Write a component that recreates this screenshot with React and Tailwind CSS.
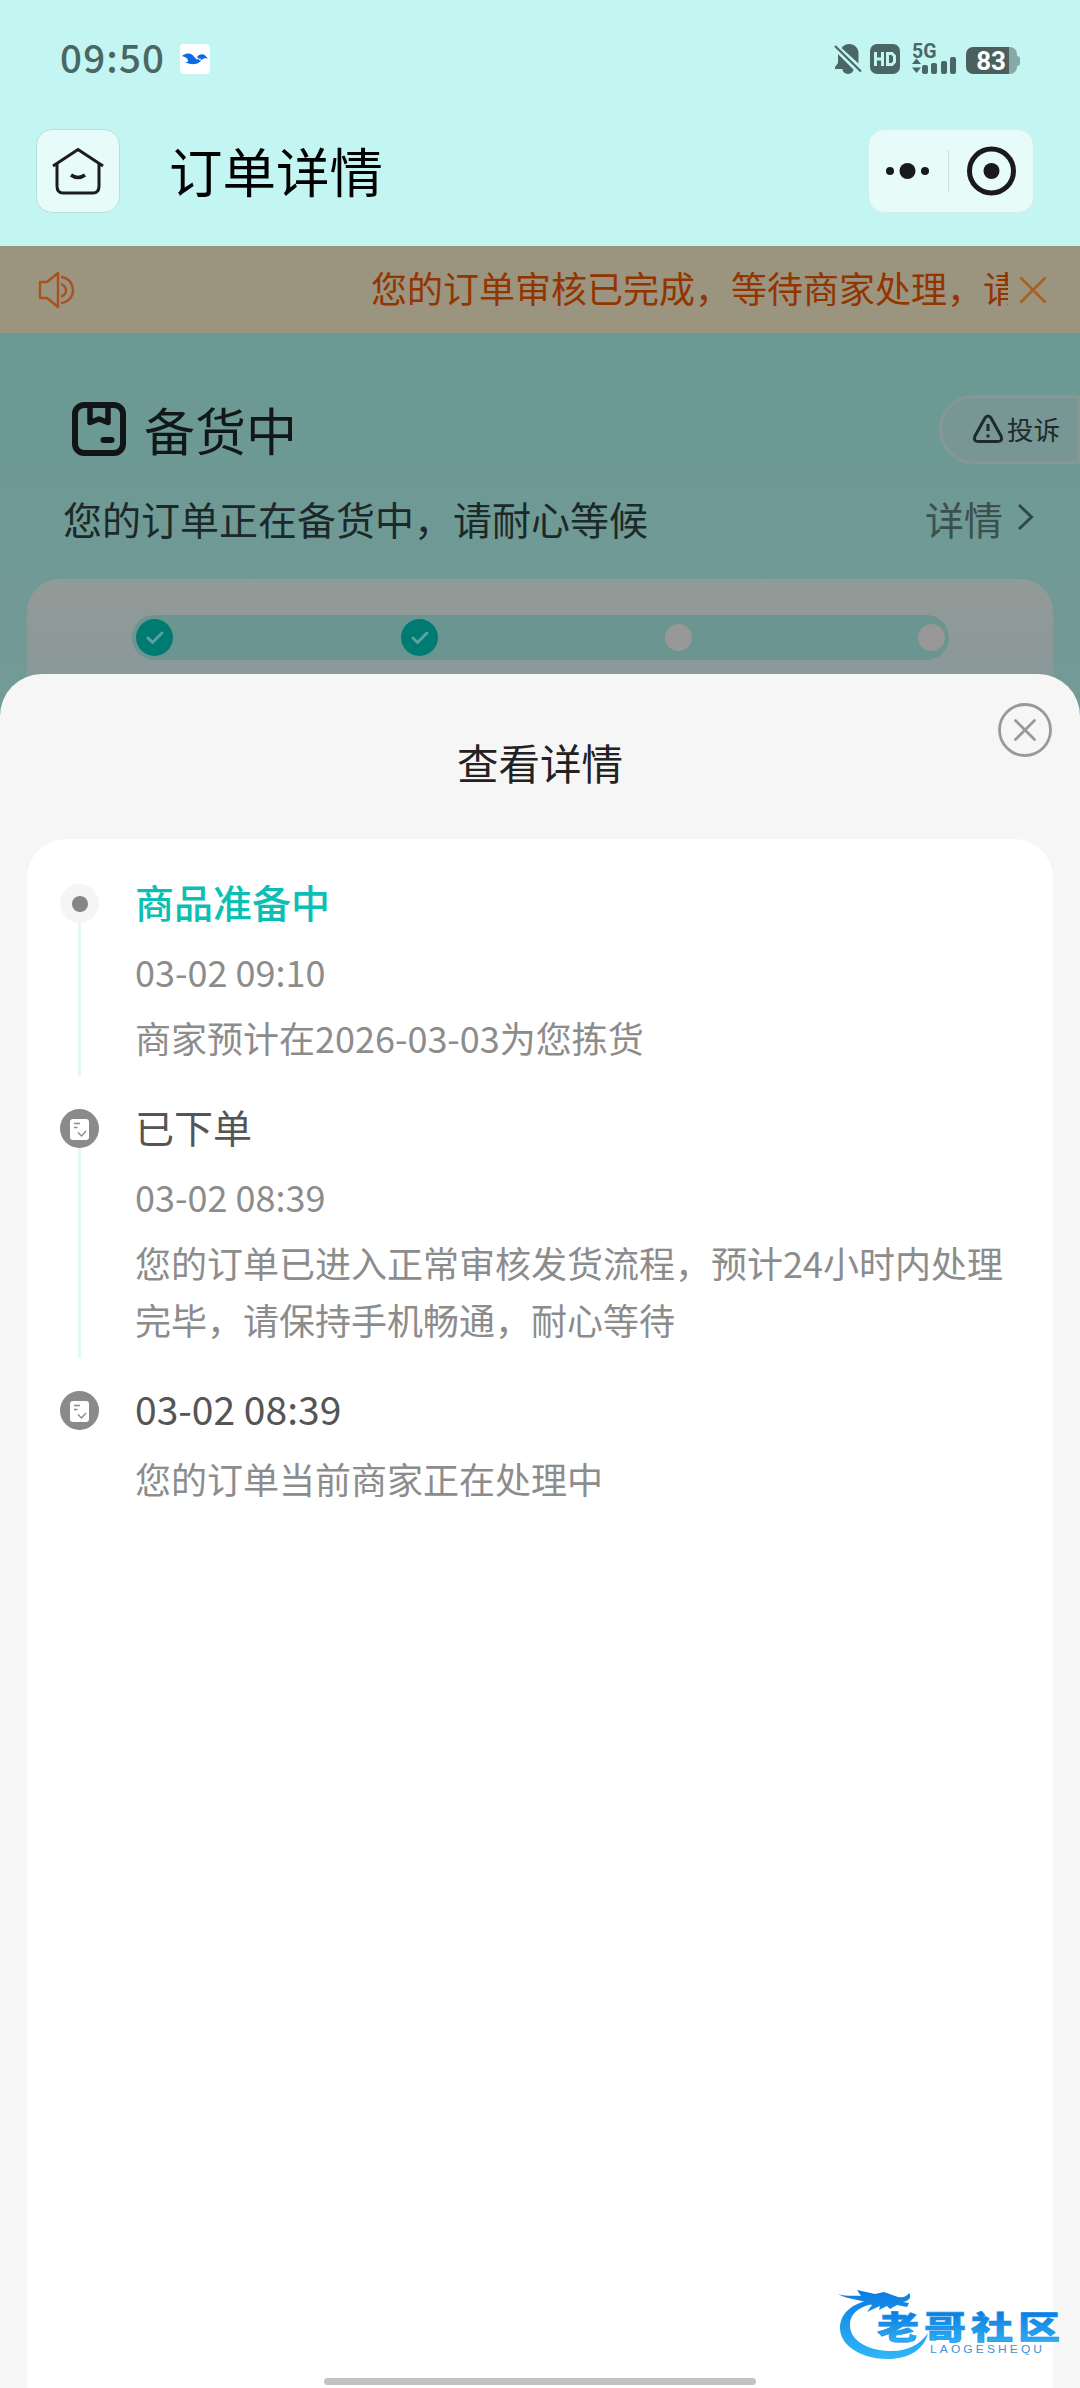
const timeline = [
  {
    title: '商品准备中',
    time: '03-02 09:10',
    desc: '商家预计在2026-03-03为您拣货',
    active: true,
  },
  {
    title: '已下单',
    time: '03-02 08:39',
    desc: '您的订单已进入正常审核发货流程，预计24小时内处理完毕，请保持手机畅通，耐心等待',
  },
  {
    title: '03-02 08:39',
    desc: '您的订单当前商家正在处理中',
  },
];

function StatusBar() {
  return (
    <div className="flex h-[118px] items-center justify-between pl-[60px] pr-[60px] text-[#4a6766]">
      <div className="flex items-center">
        <span className="-mt-[5px] w-[120px] font-['Noto_Sans_CJK_SC'] text-[38.500px] leading-none font-medium tracking-[1.2px]">09:50</span>
        <span className="flex h-[30px] w-[30px] items-center justify-center rounded-[4px] bg-white">
          <svg width="26" height="12" viewBox="0 0 26 12" fill="#0a6ae8">
            <path d="M0 3C3 0 8 -0.500 11 2.500C13 4.500 14 6.500 16 6.500L17 5.500C16.500 4.800 15.500 4.500 14.500 4.500C17 0.500 22 0 24 3.500L26 5.500C23 5 21 5.500 19.500 7C18 9 16.500 10.500 13 11C9 11.500 6 10.500 3 9.500C5 9.500 6.500 8.500 6 7C5 4.500 3 4 0 3Z" />
            <circle cx="18" cy="6.500" r="1" fill="#fff" />
          </svg>
        </span>
      </div>
      <div className="flex h-[30px] items-start">
        {/* muted bell */}
        <svg width="28" height="30" viewBox="0 0 28 30" fill="#4a6766">
          <path d="M1 25V23L4 19V10L19 25Z" />
          <path d="M7.500 4C9.500 1.300 12 0 15 0C20.500 0 24.500 4 24.500 9V19.500L7.500 4Z" />
          <path d="M8.500 25H19.500A5.500 5 0 0 1 8.500 25Z" />
          <path d="M1 2L27 27.500" stroke="#4a6766" strokeWidth="2.200" />
        </svg>
        <span className="ml-2 flex h-[30px] w-[30px] items-center justify-center rounded-[7px] bg-[#4a6766]">
          <svg width="24" height="14" viewBox="0 0 24 14" fill="none" stroke="#c3f6f2" strokeWidth="3">
            <path d="M2.500 0V14M9.500 0V14M2.500 7H9.500M14.500 1.500H19L21.500 4V10L19 12.500H14.500Z" />
          </svg>
        </span>
        <div className="ml-3 flex h-[30px] w-[46px] flex-col justify-between">
          <span className="h-[15px] font-['Roboto'] text-[19.500px] leading-[15px] font-bold">5G</span>
          <svg className="-mt-1" width="46" height="17" viewBox="0 0 46 17" fill="#4a6766">
            <path d="M0 7L4.500 1.500L9 7ZM0 10.500H9L4.500 16Z" />
            <rect x="10" y="8" width="6" height="9" rx="2" />
            <rect x="19" y="6" width="6" height="11" rx="2" />
            <rect x="29" y="4" width="6" height="13" rx="2" />
            <rect x="38" y="0" width="6" height="17" rx="2" />
          </svg>
        </div>
        <div className="ml-2 mt-[3px] flex items-center">
          <span className="flex h-[27px] w-[43px] items-center justify-end rounded-l-[7px] bg-[#4a5f5e] pr-[3px] font-['Roboto'] text-[26px] leading-none font-bold text-white">83</span>
          <span className="h-[27px] w-2 rounded-r-[7px] bg-[#86a9a7]" />
          <span className="h-[10px] w-[3px] rounded-r-[3px] bg-[#86a9a7]" />
        </div>
      </div>
    </div>
  );
}

function NavBar() {
  return (
    <div className="flex h-[128px] items-start pt-[11px] pr-[46px] pl-9">
      <button className="flex h-[84px] w-[84px] items-center justify-center rounded-[16px] border border-[#b9dfdc] bg-[#e7fbf9]">
        <svg width="52" height="50" viewBox="0 0 52 50" fill="none" stroke="#1c1c1c" strokeWidth="3">
          <path d="M1 20L26 3.500L51 20" />
          <path d="M5 18V40Q5 47 11 47H41Q47 47 47 40V18" />
          <path d="M19 29Q26 34 33 29" strokeWidth="3.500" />
        </svg>
      </button>
      <h1 className="ml-[49px] text-[53.500px] leading-[82px] text-black">订单详情</h1>
      <div className="ml-auto flex h-[84px] w-[166px] items-center rounded-[16px] border border-[#d3eeec] bg-[#e7fbf9]">
        <svg width="164" height="82" viewBox="0 0 164 82" fill="#1a1a1a">
          <circle cx="21" cy="41" r="4" />
          <circle cx="38.500" cy="41" r="8" />
          <circle cx="56" cy="41" r="4" />
          <rect x="79" y="20" width="1" height="42" fill="#c9e2e0" />
          <circle cx="122.500" cy="41" r="22" fill="none" stroke="#1a1a1a" strokeWidth="5" />
          <circle cx="122.500" cy="41" r="8" />
        </svg>
      </div>
    </div>
  );
}

function NoticeBar() {
  return (
    <div className="flex h-[87px] items-center bg-[#9b947f] pr-[33px] pl-[38px]">
      <svg width="38" height="38" viewBox="0 0 38 38" fill="none" stroke="#a9521f" strokeWidth="2.400" strokeLinejoin="round">
        <path d="M2 11H9L20 2V36L9 27H2Z" />
        <path d="M23 13Q28 15 28 19.500Q28 24 23 25.500" />
        <path d="M23 6C32 7 35 14 35 19.500S31 31 23 32" />
      </svg>
      <p className="-mt-[5px] ml-[295px] w-[637px] overflow-hidden text-[36px] leading-[54px] whitespace-nowrap text-[#933500]">
        您的订单审核已完成，等待商家处理，请耐心等待
      </p>
      <svg className="ml-[11px]" width="28" height="28" viewBox="0 0 28 28" fill="none" stroke="#a86120" strokeWidth="2.600">
        <path d="M1.500 1.500L26.500 26.500M26.500 1.500L1.500 26.500" />
      </svg>
    </div>
  );
}

function CheckDot() {
  return (
    <span className="flex h-[37px] w-[37px] items-center justify-center rounded-full bg-[#007b72]">
      <svg width="18" height="14" viewBox="0 0 18 14" fill="none" stroke="#5aa39d" strokeWidth="3" strokeLinecap="round" strokeLinejoin="round">
        <path d="M2 7L6.500 11.500L16 2" />
      </svg>
    </span>
  );
}

function OrderStatus() {
  return (
    <div className="h-[387px] bg-linear-to-b from-[#6b9994] to-[#739a97] pt-[62px]">
      <div className="flex h-[68px] items-center pl-[72px]">
        <svg width="54" height="54" viewBox="0 0 54 54" fill="none" stroke="#111515" strokeWidth="6" strokeLinejoin="round">
          <rect x="3" y="3" width="48" height="48" rx="9" />
          <path d="M18 4V20.500L27 17L36 20.500V4" strokeWidth="5.500" />
          <path d="M31.500 38H39.500" strokeLinecap="round" />
        </svg>
        <h2 className="ml-[18px] text-[51px] leading-[68px] text-[#111817]">备货中</h2>
        <div className="ml-auto flex h-[69px] w-[141px] items-center rounded-l-full border-3 border-[#869794] bg-[#789794] pl-[30px] text-[#1d2b2a]">
          <svg width="32" height="30" viewBox="0 0 32 30" fill="none" stroke="#1d2b2a" strokeWidth="3" strokeLinejoin="round">
            <path d="M13 4Q16 0 19 4L29 22Q31 27.500 26 27.500H6Q1 27.500 3 22Z" />
            <path d="M16 10V17M16 20.500V23.500" />
          </svg>
          <span className="ml-[3px] text-[26.500px] leading-none">投诉</span>
        </div>
      </div>
      <div className="mt-[27px] flex h-[56px] items-center pr-[46px] pl-[63px] text-[39px]">
        <p className="text-[#1c2928]">您的订单正在备货中，请耐心等候</p>
        <span className="ml-auto text-[#3b504e]">详情</span>
        <svg className="-mt-[3px] ml-[12px]" width="19" height="28" viewBox="0 0 19 28" fill="none" stroke="#344745" strokeWidth="3">
          <path d="M4 2L16.500 14L4 26" />
        </svg>
      </div>
      <div className="mx-[27px] mt-[33px] h-[141px] rounded-t-[33px] bg-linear-to-b from-[#929a97] to-[#88979a] pt-[36px]">
        <div className="ml-[105px] flex h-[45px] w-[817px] items-center rounded-full bg-[#6b9590] pl-1">
          <CheckDot />
          <span className="ml-[228px]"><CheckDot /></span>
          <span className="ml-[227px] h-[27px] w-[27px] rounded-full bg-[#989898]" />
          <span className="ml-[226px] h-[27px] w-[27px] rounded-full bg-[#989898]" />
        </div>
      </div>
    </div>
  );
}

function NodeIcon({ active }) {
  if (active) {
    return (
      <span className="flex h-[39px] w-[39px] items-center justify-center rounded-full bg-[#f5f5f5]">
        <span className="h-4 w-4 rounded-full bg-[#868686]" />
      </span>
    );
  }
  return (
    <svg width="39" height="39" viewBox="0 0 39 39" fill="none">
      <circle cx="19.500" cy="19.500" r="19.500" fill="#8a8a8a" />
      <rect x="10" y="10" width="19" height="21" rx="3" fill="#fff" />
      <path d="M14 14.500H20M14 18.500H17.500M18 23.500L21.500 27L26 22" stroke="#8a8a8a" strokeWidth="1.400" />
    </svg>
  );
}

function TimelineItem({ item, last }) {
  return (
    <div className="flex">
      <div className="flex w-[39px] flex-col items-center">
        <NodeIcon active={item.active} />
        {!last && <span className="mb-[33px] w-[3px] flex-1 bg-[#e4f8f6]" />}
      </div>
      <div className="-mt-[3px] ml-[36px] flex-1 pb-[44px]">
        <h3 className={item.active ? 'text-[39px] leading-[40px] font-medium text-[#0cbfb4]' : 'text-[39px] leading-[40px] text-[#555]'}>
          {item.title}
        </h3>
        {item.time && <p className="mt-[22px] mb-[9px] text-[36px] leading-[57px] text-[#8c8c8c]">{item.time}</p>}
        <p className={item.time ? '-mb-px text-[36px] leading-[57px] text-[#8c8c8c]' : 'mt-[22px] text-[36px] leading-[57px] text-[#8c8c8c]'}>
          {item.desc}
        </p>
      </div>
    </div>
  );
}

function DetailSheet() {
  return (
    <div className="relative -mt-[46px] flex h-[1714px] flex-col rounded-t-[42px] bg-[#f6f6f6] px-[27px]">
      <div className="flex h-[165px] items-center justify-center pt-[12px]">
        <h2 className="text-[41.500px] text-[#222]">查看详情</h2>
      </div>
      <button className="absolute top-[29px] right-[28px]">
        <svg width="54" height="54" viewBox="0 0 54 54" fill="none" stroke="#999" strokeWidth="2.800" strokeLinecap="round">
          <circle cx="27" cy="27" r="25.500" />
          <path d="M17.500 17.500L36.500 36.500M36.500 17.500L17.500 36.500" />
        </svg>
      </button>
      <div className="flex-1 rounded-t-[39px] bg-white pt-[45px] pr-[20px] pl-[33px]">
        {timeline.map((item, i) => (
          <TimelineItem key={item.desc} item={item} last={i === timeline.length - 1} />
        ))}
      </div>
    </div>
  );
}

function Watermark() {
  return (
    <svg className="absolute right-[16px] bottom-[24px]" width="232" height="80" viewBox="832 2284 232 80">
      <defs>
        <linearGradient id="wm" gradientUnits="userSpaceOnUse" x1="0" y1="2290" x2="0" y2="2360">
          <stop offset="0" stopColor="#0b7be0" />
          <stop offset="1" stopColor="#2fb8f8" />
        </linearGradient>
        <linearGradient id="wmText" x1="0" y1="0" x2="0" y2="1">
          <stop offset="0.2" stopColor="#0b7be0" />
          <stop offset="0.9" stopColor="#2fb0f5" />
        </linearGradient>
      </defs>
      <g fill="url(#wm)">
        <path d="M880 2299C855 2300 840 2312 840 2328C840 2346 862 2359 888 2359C908 2359 924 2350 928 2333C920 2345 906 2352 889 2351C866 2350 850 2340 850 2325C850 2313 860 2305 880 2303Z" />
        <path d="M838 2294C848 2297 854 2295 861 2296L857 2290L875 2294L884 2292L898 2297C904 2298 907 2296 909 2293C912 2297 909 2301 903 2302L909 2303L907 2307L897 2305L890 2309L887 2306L879 2310L880 2306L867 2312L872 2305C862 2299 848 2300 838 2294Z" />
      </g>
      <text x="0" y="0" transform="translate(877 2338.500) scale(1 0.76)" fill="url(#wmText)" stroke="#1a8fe8" strokeWidth="0.800" fontSize="42" fontWeight="900" letterSpacing="5" fontFamily="'Noto Sans CJK SC', sans-serif">老哥社区</text>
      <text x="0" y="0" transform="translate(930 2352.500) scale(1.2 1)" fill="#3f93d2" fontSize="10" letterSpacing="2.600" fontFamily="'Liberation Sans', sans-serif">LAOGESHEQU</text>
    </svg>
  );
}

export default function App() {
  return (
    <div className="relative h-[2388px] w-[1080px] overflow-hidden bg-[#c3f6f2] font-['Noto_Sans_CJK_SC',sans-serif]">
      <StatusBar />
      <NavBar />
      <NoticeBar />
      <OrderStatus />
      <DetailSheet />
      <Watermark />
      {/* home indicator */}
      <div className="absolute bottom-[3px] left-[324px] h-[7px] w-[432px] rounded-full bg-[#c2c2c2]" />
    </div>
  );
}
